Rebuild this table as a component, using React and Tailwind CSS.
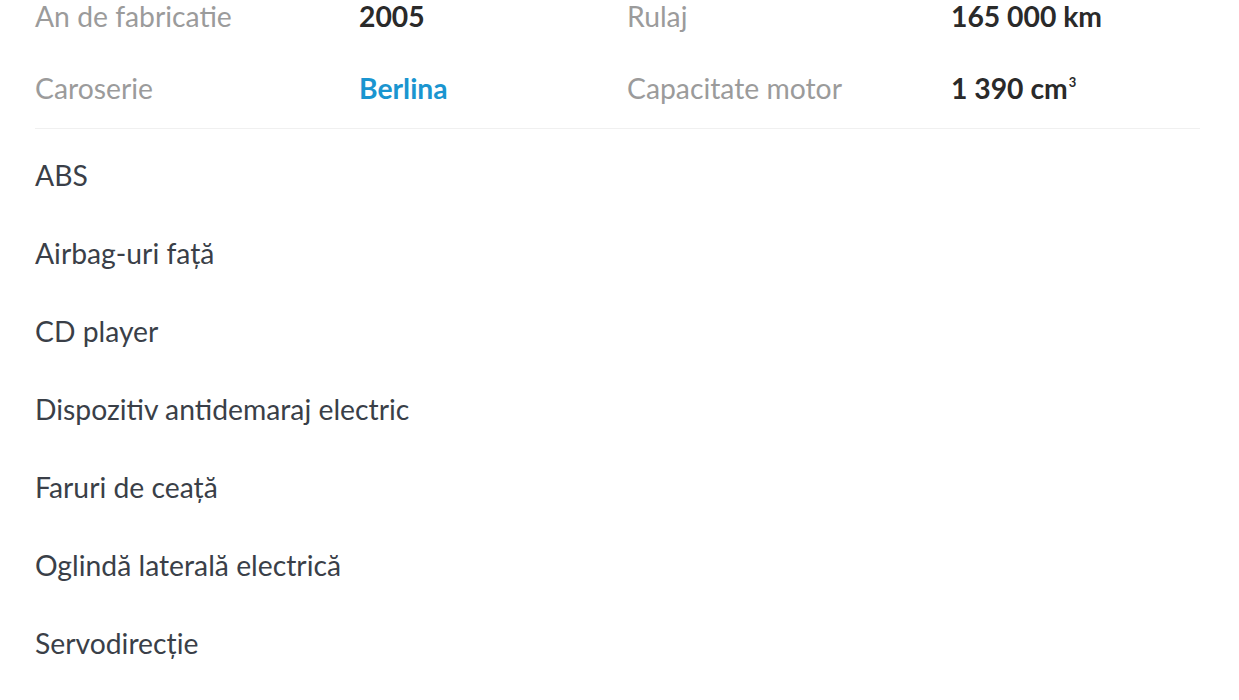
export default function App() {
    const specs = [
        [
            { label: "An de fabricatie", value: "2005" },
            { label: "Rulaj", value: "165 000 km" },
        ],
        [
            { label: "Caroserie", value: "Berlina", link: true },
            { label: "Capacitate motor", value: "1 390 cm", sup: "3" },
        ],
    ];

    const features = [
        "ABS",
        "Airbag-uri față",
        "CD player",
        "Dispozitiv antidemaraj electric",
        "Faruri de ceață",
        "Oglindă laterală electrică",
        "Servodirecție",
    ];

    return (
        <div className="min-h-screen bg-white font-['Lato',sans-serif] text-[28.3px] overflow-hidden">
            <div className="ml-[35px] w-[1165px] -mt-[20px]">
                <div className="border-b border-[#f0f0f0] pb-[4px]">
                    {specs.map((row, i) => (
                        <div key={i} className="grid grid-cols-[592px_1fr] h-[72px] items-center">
                            {row.map((item) => (
                                <div key={item.label} className="flex">
                                    <span className="w-[324px] shrink-0 text-[#9b9b9b]">{item.label}</span>
                                    <span
                                        className={
                                            item.link
                                                ? "font-bold text-[#1a95d0]"
                                                : "font-bold text-[#2a2a2a]"
                                        }
                                    >
                                        {item.value}
                                        {item.sup && (
                                            <sup className="text-[13px] top-[-12px] ml-[1px]">{item.sup}</sup>
                                        )}
                                    </span>
                                </div>
                            ))}
                        </div>
                    ))}
                </div>
                <ul className="pt-[7px]">
                    {features.map((f) => (
                        <li key={f} className="h-[78px] flex items-center text-[#3a3f48]">
                            {f}
                        </li>
                    ))}
                </ul>
            </div>
        </div>
    );
}
